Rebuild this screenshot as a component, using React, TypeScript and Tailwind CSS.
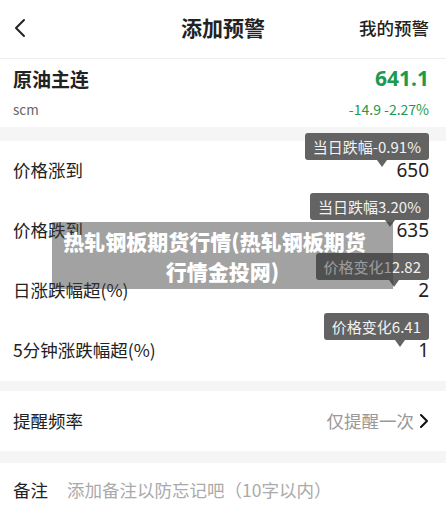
import React from 'react';

const font = { fontFamily: '"Noto Sans CJK SC", "Noto Sans", sans-serif' };

interface AlertRow {
  label: string;
  value: string;
  tip: string;
  arrow: string; // tailwind class for the pointer offset
}

const rows: AlertRow[] = [
  { label: '价格涨到', value: '650', tip: '当日跌幅-0.91%', arrow: 'right-[42px]' },
  { label: '价格跌到', value: '635', tip: '当日跌幅3.20%', arrow: 'right-[34px]' },
  { label: '日涨跌幅超(%)', value: '2', tip: '价格变化12.82', arrow: 'right-[30px]' },
  { label: '5分钟涨跌幅超(%)', value: '1', tip: '价格变化6.41', arrow: 'right-[24px]' },
];

const Band: React.FC<{ h: string }> = ({ h }) => <div className={`${h} bg-[#f5f5f5]`} />;

const Tip: React.FC<{ text: string; arrow: string }> = ({ text, arrow }) => (
  <div className="absolute right-[17px] -top-[8px] z-10">
    <div className="h-[27px] px-[8px] flex items-center bg-[#636363] rounded-[3px] text-[15px] text-[#f2f2f2] leading-none whitespace-nowrap">
      {text}
    </div>
    <div
      className={`absolute ${arrow} top-[27px] w-0 h-0 border-l-[5px] border-r-[5px] border-t-[7px] border-l-transparent border-r-transparent border-t-[#636363]`}
    />
  </div>
);

const App: React.FC = () => {
  return (
    <div className="relative w-[446px] h-[512px] overflow-hidden bg-white text-[#222]" style={font}>
      {/* header */}
      <header className="h-[59px] border-b border-[#efefef] flex items-center justify-between pl-[13px] pr-[17px] relative">
        <svg width="12" height="20" viewBox="0 0 12 20" className="ml-[1px] -mt-[2px]">
          <path d="M10 2 L2 10 L10 18" fill="none" stroke="#222" strokeWidth="2" strokeLinecap="round" strokeLinejoin="round" />
        </svg>
        <h1 className="absolute left-0 right-0 -mt-[2px] text-center text-[21px] font-semibold pointer-events-none">添加预警</h1>
        <span className="text-[17.5px] font-medium -mt-[2px]">我的预警</span>
      </header>

      {/* quote */}
      <section className="h-[68px] pl-[13px] pr-[17px] pt-[5px]">
        <div className="flex items-center justify-between h-[30px]">
          <span className="text-[19px] font-bold">原油主连</span>
          <span className="text-[21px] font-bold text-[#1e9a4c]" style={{ fontFamily: '"Noto Sans", sans-serif' }}>641.1</span>
        </div>
        <div className="flex items-center justify-between h-[22px] mt-[4px]">
          <span className="text-[13.5px] text-[#666]">scm</span>
          <span className="text-[14px] text-[#1e9a4c]">-14.9 -2.27%</span>
        </div>
      </section>

      <Band h="h-[14px]" />

      {rows.map((r) => (
        <div key={r.label} className="relative h-[60px] flex items-center justify-between pl-[13px] pr-[17px]">
          <span className="text-[17.5px] mt-[-2px]">{r.label}</span>
          <span className="text-[19px] mt-[-2px] text-[#222]" style={{ fontFamily: '"Noto Sans", sans-serif' }}>{r.value}</span>
          <Tip text={r.tip} arrow={r.arrow} />
        </div>
      ))}

      <Band h="h-[10px]" />

      <div className="h-[60px] flex items-center justify-between pl-[13px] pr-[17px]">
        <span className="text-[17.5px]">提醒频率</span>
        <div className="flex items-center gap-[5px]">
          <span className="text-[17.5px] text-[#999]">仅提醒一次</span>
          <svg width="10" height="16" viewBox="0 0 10 16">
            <path d="M2 2 L8 8 L2 14" fill="none" stroke="#111" strokeWidth="2" strokeLinecap="round" strokeLinejoin="round" />
          </svg>
        </div>
      </div>

      <Band h="h-[12px]" />

      <div className="h-[60px] flex items-center pl-[13px] pr-[17px] gap-[19px] -mt-[3px]">
        <span className="text-[17.5px]">备注</span>
        <span className="text-[17.5px] text-[#aaa]">添加备注以防忘记吧（10字以内）</span>
      </div>

      {/* watermark overlay */}
      <div className="absolute left-[52px] top-[222px] w-[341px] h-[67px] bg-[rgba(60,60,60,0.48)] z-20 flex items-center justify-center">
        <p className="text-center text-white font-black text-[21px] leading-[30px]">
          <span className="mr-[16px]">热轧钢板期货行情(热轧钢板期货</span>
          <br />
          行情金投网)
        </p>
      </div>
    </div>
  );
};

export default App;
